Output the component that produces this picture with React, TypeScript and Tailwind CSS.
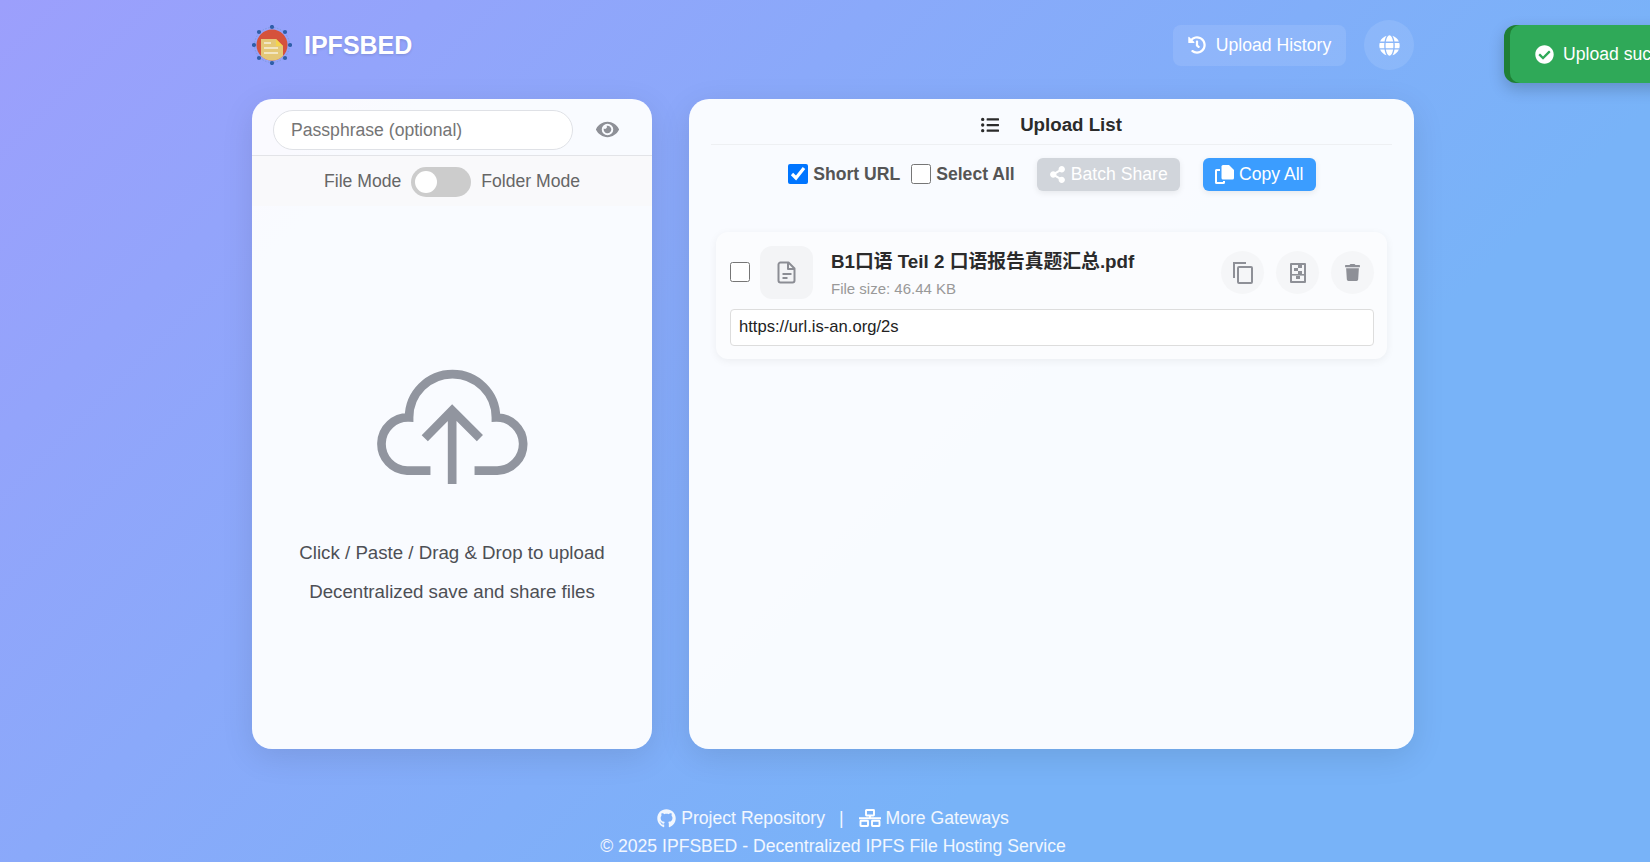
import { FaEye, FaGithub, FaGlobe, FaHistory, FaListUl, FaShareAlt, FaTrash, FaCheckCircle } from 'react-icons/fa'

const Logo = () => (
  <svg width="40" height="40" viewBox="0 0 40 40">
    <defs>
      <clipPath id="logo-clip">
        <circle cx="20" cy="20" r="15.5" />
      </clipPath>
    </defs>
    <circle cx="20" cy="20" r="17.5" fill="none" stroke="#7c9be0" strokeWidth="1" strokeDasharray="1.5 1.5" />
    {[[20, 2], [33, 7], [38, 20], [33, 33], [20, 38], [7, 33], [2, 20], [7, 7]].map(([cx, cy]) => (
      <circle key={`${cx}-${cy}`} cx={cx} cy={cy} r="2.1" fill="#2f5ea8" />
    ))}
    <circle cx="20" cy="20" r="15.5" fill="#d5523c" />
    <g clipPath="url(#logo-clip)">
      <path d="M9 14h15l7 7v15H9z" fill="#e4c877" />
      <path d="M24 14l7 7h-7z" fill="#f4d44d" />
      <path d="M12 18h7M12 23h14M12 28h14" stroke="#f6f0dc" strokeWidth="1.6" />
    </g>
  </svg>
)

const CloudUpload = () => (
  <svg width="151" height="117" viewBox="320 85 452 350" fill="none" stroke="#91959f" strokeWidth="26">
    <path d="M480 392H410A79 79 0 0 1 416 233A130 130 0 0 1 676 233A79 79 0 0 1 680 392H612" />
    <path d="M545 432V212M463 295L545 212L628 295" />
  </svg>
)

const FileIcon = () => (
  <svg width="20" height="23" viewBox="0 0 20 23" fill="none" stroke="#8b8d94" strokeWidth="2" strokeLinejoin="round">
    <path d="M3.5 1.5h8l6 6v12a2 2 0 0 1-2 2h-12a2 2 0 0 1-2-2v-16a2 2 0 0 1 2-2z" />
    <path d="M11 1.5v6.5h6.5M5.5 13h9M5.5 17h5" />
  </svg>
)

const CopyOutline = () => (
  <svg width="20" height="22" viewBox="0 0 20 22" fill="none" stroke="#8e9097" strokeWidth="2">
    <path d="M1 16V1h12" />
    <rect x="5" y="5" width="14" height="16" rx="1" />
  </svg>
)

const ArchiveIcon = () => (
  <svg width="16" height="20" viewBox="0 0 16 20" fill="#8e9097">
    <path fillRule="evenodd" d="M1 0h14a1 1 0 0 1 1 1v18a1 1 0 0 1-1 1H1a1 1 0 0 1-1-1V1a1 1 0 0 1 1-1zM2 2v16h12V2z" />
    <rect x="8" y="2" width="4" height="3" />
    <rect x="4" y="5" width="4" height="3" />
    <rect x="8" y="8" width="4" height="3" />
    <rect x="2" y="11" width="12" height="1.6" />
    <rect x="6" y="13" width="4" height="3" />
  </svg>
)

const CopyAllIcon = () => (
  <svg width="19" height="19" viewBox="0 0 19 19" fill="white">
    <path d="M8 0h6l5 5v8a1.5 1.5 0 0 1-1.500 1.500H8A1.500 1.500 0 0 1 6.500 13V1.500A1.500 1.500 0 0 1 8 0z" />
    <path d="M5 5H1.500A.5.500 0 0 0 1 5.500v12a.5.500 0 0 0 .5.500h7a.5.500 0 0 0 .5-.5V16" fill="none" stroke="white" strokeWidth="2" />
  </svg>
)

const GatewayIcon = () => (
  <svg width="22" height="18" viewBox="0 0 22 18" fill="none" stroke="white" strokeWidth="1.900">
    <rect x="7" y="1" width="8" height="5.500" rx="0.500" />
    <path d="M11 6.500V9M0 9.200h22" />
    <rect x="1.500" y="11.800" width="7.500" height="5.200" rx="0.500" />
    <rect x="13" y="11.800" width="7.500" height="5.200" rx="0.500" />
  </svg>
)

const ModeRow = () => (
  <div className="flex h-[50px] items-center justify-center gap-[10px] bg-[#f9f9fb] pt-[1px] text-[17.6px] text-[#666]">
    <span>File Mode</span>
    <span className="flex h-[30px] w-[60px] items-center rounded-full bg-[#ccc] pl-1">
      <span className="h-[22px] w-[22px] rounded-full bg-white" />
    </span>
    <span>Folder Mode</span>
  </div>
)

const UploadPanel = () => (
  <section className="flex w-[400px] flex-col overflow-hidden rounded-[20px] bg-white/95 shadow-[0_8px_32px_rgba(0,0,0,0.1)]">
    <div className="flex h-[57px] items-start justify-between border-b border-[#e3e4e8] pl-[21px] pr-[33px] pt-[11px]">
      <div className="flex h-10 w-[300px] items-center rounded-[20px] border border-[#dfe1e6] bg-white pl-[17px] text-[17.6px] text-[#757575]">
        Passphrase (optional)
      </div>
      <FaEye className="mt-2 text-[23px] text-[#8e9097]" />
    </div>
    <ModeRow />
    <div className="flex flex-1 flex-col items-center pt-[162px] text-[18.7px] text-[#4d4f55]">
      <CloudUpload />
      <p className="mt-[55px] leading-[26px]">Click / Paste / Drag &amp; Drop to upload</p>
      <p className="mt-[13px] leading-[26px]">Decentralized save and share files</p>
    </div>
  </section>
)

const FileCard = () => (
  <div className="mx-[27px] mt-[41px] rounded-xl bg-[#fbfcfe] pb-[13px] pl-[14px] pr-[13px] pt-[14px] shadow-[0_2px_8px_rgba(0,0,0,0.06)]">
    <div className="flex h-[53px] items-center">
      <input type="checkbox" className="mb-[2px] h-5 w-5" />
      <div className="ml-[10px] flex h-[53px] w-[53px] items-center justify-center rounded-xl bg-[#f3f4f6]">
        <FileIcon />
      </div>
      <div className="ml-[18px] flex-1 pt-1">
        <p className="text-[18.8px] font-bold leading-[24px] text-[#2b2b2b]">B1口语 Teil 2 口语报告真题汇总.pdf</p>
        <p className="mt-[5px] text-[15px] leading-[20px] text-[#999]">File size: 46.44 KB</p>
      </div>
      <div className="flex gap-[12px]">
        <span className="flex h-[43px] w-[43px] items-center justify-center rounded-full bg-[#f5f6f8]"><CopyOutline /></span>
        <span className="flex h-[43px] w-[43px] items-center justify-center rounded-full bg-[#f5f6f8]"><ArchiveIcon /></span>
        <span className="flex h-[43px] w-[43px] items-center justify-center rounded-full bg-[#f5f6f8]"><FaTrash className="text-[17px] text-[#8e9097]" /></span>
      </div>
    </div>
    <div className="mt-[10px] flex h-[37px] items-center rounded border border-[#ddd] bg-white pb-[1px] pl-2 text-[16.6px] text-[#222]">
      https://url.is-an.org/2s
    </div>
  </div>
)

const ListPanel = () => (
  <section className="w-[725px] rounded-[20px] bg-white/95 shadow-[0_8px_32px_rgba(0,0,0,0.1)]">
    <div className="mx-[22px] flex h-[46px] items-center justify-center gap-[21px] border-b border-[#eef0f3] pt-[7px] text-[18.7px] font-bold text-[#2b2b2b]">
      <FaListUl className="text-[18px]" />
      <span>Upload List</span>
    </div>
    <div className="mt-[13px] flex h-[33px] items-center justify-center pl-[1px] text-[17.6px]">
      <label className="flex items-center gap-[5px] font-bold text-[#555]">
        <input type="checkbox" defaultChecked className="h-5 w-5" />
        Short URL
      </label>
      <label className="ml-[11px] flex items-center gap-[5px] font-bold text-[#555]">
        <input type="checkbox" className="h-5 w-5" />
        Select All
      </label>
      <button className="ml-[22px] flex h-[33px] w-[143px] items-center justify-center gap-[5px] rounded-md bg-[#d1d5db] text-white shadow-[0_2px_6px_rgba(0,0,0,0.08)]">
        <FaShareAlt className="text-[17px]" />
        Batch Share
      </button>
      <button className="ml-[23px] flex h-[33px] w-[113px] items-center justify-center gap-[5px] rounded-md bg-[#3b9dff] text-white shadow-[0_2px_6px_rgba(0,0,0,0.08)]">
        <CopyAllIcon />
        Copy All
      </button>
    </div>
    <FileCard />
  </section>
)

export default function App() {
  return (
    <div className="relative h-[862px] overflow-hidden bg-[linear-gradient(135deg,#9c9ffc_0%,#78b3f8_70%,#78b3f8_100%)] pl-4 [font-family:'Liberation_Sans','Noto_Sans_CJK_SC',sans-serif]">
      <div className="mx-auto w-[1162px] pt-5">
        <header className="flex h-[50px] items-center justify-between">
          <div className="flex items-center gap-3">
            <Logo />
            <h1 className="pt-[2px] text-[25px] font-bold text-white [text-shadow:0_1px_3px_rgba(0,0,0,0.15)]">IPFSBED</h1>
          </div>
          <div className="flex items-center gap-[18px]">
            <button className="flex h-[41px] w-[173px] items-center justify-center gap-[10px] rounded-lg bg-white/10 text-[17.6px] text-white">
              <FaHistory className="text-[18px]" />
              Upload History
            </button>
            <button className="flex h-[50px] w-[50px] items-center justify-center rounded-full bg-white/10 text-white">
              <FaGlobe className="text-[21px]" />
            </button>
          </div>
        </header>
        <main className="mt-[29px] flex h-[650px] gap-[37px]">
          <UploadPanel />
          <ListPanel />
        </main>
        <footer className="mt-[57px] flex flex-col items-center text-[17.6px] text-white/90">
          <div className="flex h-6 items-center">
            <FaGithub className="mr-[5px] text-[19px]" />
            <span>Project Repository</span>
            <span className="ml-[14px] mr-[15px]">|</span>
            <span className="mr-[5px]"><GatewayIcon /></span>
            <span>More Gateways</span>
          </div>
          <p className="mt-[4px] leading-6">© 2025 IPFSBED - Decentralized IPFS File Hosting Service</p>
        </footer>
      </div>
      <div className="absolute left-[1504px] top-[25px] h-[58px] w-[300px] rounded-xl bg-[#1f7f34] pl-[6px] shadow-[0_6px_16px_rgba(0,0,0,0.2)]">
        <div className="flex h-full items-center gap-[9px] rounded-[10px] bg-[#2fa958] pl-[25px] text-[17.6px] text-white">
          <FaCheckCircle className="text-[19px]" />
          Upload successful
        </div>
      </div>
    </div>
  )
}
